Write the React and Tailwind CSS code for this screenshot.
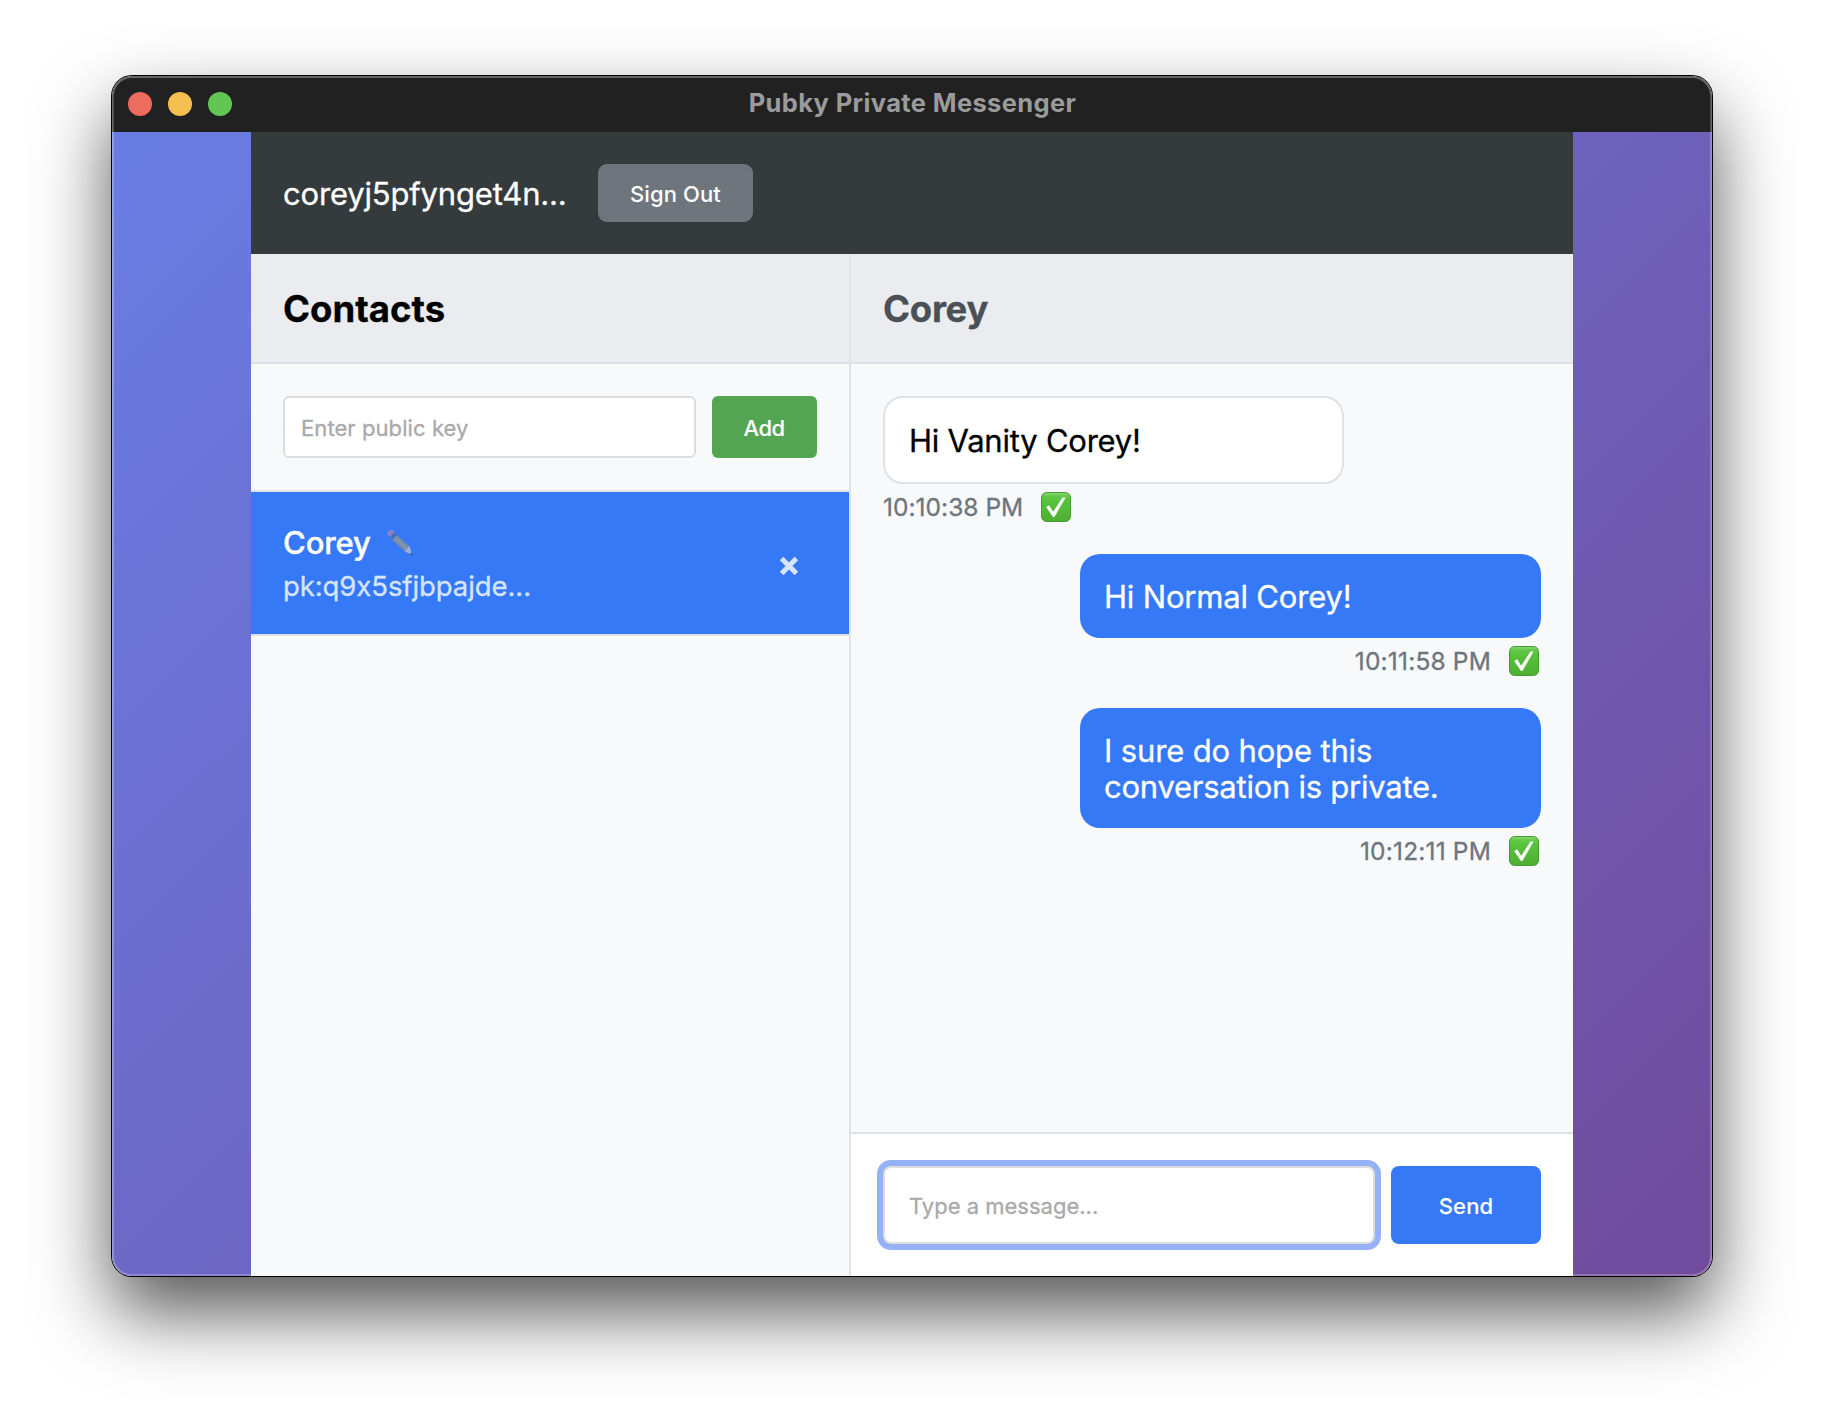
function CheckBadge({ id }) {
  return (
    <svg className="h-[30px] w-[30px] shrink-0" viewBox="0 0 30 30" aria-hidden="true">
      <defs>
        <linearGradient id={id} x1="0" y1="0" x2="0" y2="1">
          <stop offset="0" stopColor="#8fd978" />
          <stop offset="0.13" stopColor="#62c947" />
          <stop offset="0.3" stopColor="#57c23b" />
          <stop offset="1" stopColor="#4fae33" />
        </linearGradient>
      </defs>
      <rect x="0.5" y="0.5" width="29" height="29" rx="5.2" fill={`url(#${id})`} stroke="#439b2f" />
      <path d="M5.2 15 L8.2 13.2 L12.2 19.8 L21.4 5.6 L24.6 5.6 L13.4 25 L12 25 Z" fill="#fff" />
    </svg>
  );
}

function Pencil() {
  return (
    <svg className="h-[28px] w-[28px] shrink-0 opacity-75" viewBox="0 0 28 28" aria-hidden="true">
      <path d="M1.6 5.4 Q0.8 3 2.6 1.9 Q4.8 0.6 6.8 1.4 L9 4.2 L4.2 8.2 Z" fill="#b483b8" />
      <path d="M6.8 1.4 L10 4.8 L4.8 9.2 L3 7 Z" fill="#8c8ac6" />
      <path d="M8.4 3.2 L11.2 6.2 L6.2 10.9 L3.9 8 Z" fill="#5668a4" />
      <path d="M11.2 6.2 L23.6 17.6 L18.6 22.3 L6.2 10.9 Z" fill="#8e938c" />
      <path d="M9.4 7.8 L21.8 19.3 L20.4 20.6 L8 9.2 Z" fill="#9ea298" />
      <path d="M23.6 17.6 L26.6 26.4 L18.6 22.3 Q19.6 20.2 21 20 Q21.6 18 23.6 17.6 Z" fill="#b9bfd2" />
      <path d="M25.6 23.4 L26.8 26.8 L23.6 25 Z" fill="#2c3550" />
    </svg>
  );
}

function Message({ id, sent, time, timeClass, children }) {
  return (
    <div className={sent ? "flex flex-col items-end" : "flex flex-col items-start"}>
      {sent ? (
        <div className="w-[461px] rounded-[20px] bg-[#3579f7] px-6 pt-[25px] pb-[23px] text-[31px] leading-[36px] text-white">{children}</div>
      ) : (
        <div className="w-[461px] rounded-[20px] border-2 border-[#dfe2e6] bg-white px-6 pt-[25px] pb-[23px] text-[31px] leading-[36px] text-black">{children}</div>
      )}
      <div className={sent ? "mt-2 flex h-[30px] items-center pr-[2px]" : "mt-2 flex h-[30px] items-center"}>
        <span className={timeClass}>{time}</span>
        <CheckBadge id={id} />
      </div>
    </div>
  );
}

export default function App() {
  return (
    <div className="h-[1424px] w-[1824px] overflow-hidden bg-white px-[112px] pt-[76px] font-['Inter','Liberation_Sans',sans-serif] [-webkit-text-stroke:0.3px]">
      <div className="relative flex h-[1200px] w-[1600px] flex-col rounded-[20px] shadow-[0_0_0_1px_#000,0_36px_74px_rgba(0,0,0,0.67)]">
        <div className="flex h-[56px] shrink-0 items-center rounded-t-[20px] bg-[#212121] px-4">
          <div className="flex w-[300px] gap-4">
            <span className="h-6 w-6 rounded-full bg-[#ed6b5f]" />
            <span className="h-6 w-6 rounded-full bg-[#f5bf4f]" />
            <span className="h-6 w-6 rounded-full bg-[#62c655]" />
          </div>
          <div className="flex-1 pb-[2px] pl-[1px] text-center text-[25.5px] leading-[32px] font-bold tracking-[0.36px] text-[#9b9b9b] [-webkit-text-stroke:0]">
            Pubky Private Messenger
          </div>
          <div className="w-[300px]" />
        </div>

        <div className="flex min-h-0 flex-1 justify-center overflow-hidden rounded-b-[20px] bg-[linear-gradient(135deg,#697de4,#714b9c)]">
          <div className="flex w-[1322px] flex-col">
            <header className="flex h-[122px] shrink-0 items-center bg-[#353a3d] pl-8">
              <span className="w-[315px] pt-[1px] text-[31px] leading-[36px] tracking-[-0.17px] whitespace-nowrap text-white">
                coreyj5pfynget4n...
              </span>
              <button className="h-[58px] w-[155px] rounded-[9px] bg-[#6e757d] pt-[1px] text-[22px] leading-[28px] font-medium tracking-[0.1px] text-white [-webkit-text-stroke:0]">
                Sign Out
              </button>
            </header>

            <div className="flex min-h-0 flex-1">
              <aside className="w-[600px] shrink-0 border-r-2 border-[#dfe2e6] bg-[#f8f9fb]">
                <div className="flex h-[110px] items-center border-b-2 border-[#dfe0e6] bg-[#ebecf0] pt-[2px] pl-8">
                  <h2 className="text-[36.5px] leading-[44px] font-bold tracking-[0.05px] text-black">Contacts</h2>
                </div>
                <div className="flex h-[128px] gap-4 border-b-2 border-[#dfe2e6] px-8 pt-8">
                  <div className="flex h-[62px] w-[413px] items-center rounded-[6px] border-2 border-[#dddddd] bg-white pt-[1px] pl-4 text-[22px] leading-[28px] tracking-[0.08px] text-[#a9a9a9]">
                    Enter public key
                  </div>
                  <button className="h-[62px] w-[105px] rounded-[6px] bg-[#54a551] pt-[1px] pr-[1px] text-[22px] leading-[28px] font-medium tracking-[-0.6px] text-white [-webkit-text-stroke:0.1px]">
                    Add
                  </button>
                </div>
                <div className="flex h-[144px] items-start border-b-2 border-[#dfe2e6] bg-[#3579f7] bg-clip-padding px-8 pt-8">
                  <div className="flex-1">
                    <div className="flex h-[38px] items-center gap-[15px] text-[31px] leading-[38px] font-medium tracking-[-0.1px] text-white">
                      <span className="[-webkit-text-stroke:0.4px]">Corey</span>
                      <Pencil />
                    </div>
                    <div className="mt-[6px] text-[27.5px] leading-[36px] tracking-[-0.08px] text-[#d6e4fd] [font-feature-settings:'calt'_0]">
                      pk:q9x5sfjbpajde...
                    </div>
                  </div>
                  <svg className="mt-[31px] mr-[17px] h-[22px] w-[22px]" viewBox="0 0 22 22" aria-hidden="true">
                    <path d="M3.6 3.6 L18.4 18.4 M18.4 3.6 L3.6 18.4" fill="none" stroke="#d6e4fd" strokeWidth="5" />
                  </svg>
                </div>
              </aside>

              <main className="flex min-w-0 flex-1 flex-col bg-[#f8f9fb]">
                <div className="flex h-[110px] shrink-0 items-center border-b-2 border-[#dfe0e6] bg-[#ebecf0] pt-[2px] pl-8">
                  <h2 className="text-[36.5px] leading-[44px] font-bold tracking-[-0.25px] text-[#4a5056]">Corey</h2>
                </div>
                <div className="flex min-h-0 flex-1 flex-col gap-8 px-8 pt-8">
                  <Message id="badge-a" time="10:10:38 PM" timeClass="mr-[18px] text-[24.5px] leading-[30px] tracking-[0.03px] text-[#6e757d]">
                    <span className="tracking-[-0.23px]">Hi Vanity Corey!</span>
                  </Message>
                  <Message id="badge-b" sent time="10:11:58 PM" timeClass="mr-[18px] text-[24.5px] leading-[30px] tracking-[0.18px] text-[#6e757d]">
                    <span className="tracking-[-0.18px]">Hi Normal Corey!</span>
                  </Message>
                  <Message id="badge-c" sent time="10:12:11 PM" timeClass="mr-[18px] text-[24.5px] leading-[30px] tracking-[0.18px] text-[#6e757d]">
                    <span className="tracking-[-0.15px]">I sure do hope this</span>
                    <br />
                    <span className="tracking-[-0.25px]">conversation is private.</span>
                  </Message>
                </div>
                <div className="flex h-[144px] shrink-0 gap-4 border-t-2 border-[#dfe2e6] bg-white px-8 pt-8">
                  <div className="flex h-[78px] w-[492px] items-center rounded-[8px] border-2 border-[#dddddd] bg-white pt-[1px] pl-6 text-[22px] leading-[28px] tracking-[0px] text-[#a9a9a9] shadow-[0_0_0_6px_#95b2f6]">
                    Type a message...
                  </div>
                  <button className="h-[78px] w-[150px] rounded-[8px] bg-[#3579f7] pt-[1px] text-[22px] leading-[28px] font-medium tracking-[0.1px] text-white [-webkit-text-stroke:0.1px]">
                    Send
                  </button>
                </div>
              </main>
            </div>
          </div>
        </div>
        <div className="pointer-events-none absolute inset-0 rounded-[20px] shadow-[inset_0_0_0_2px_rgba(255,255,255,0.22),inset_0_1px_0_1px_rgba(255,255,255,0.12)]" />
      </div>
    </div>
  );
}
